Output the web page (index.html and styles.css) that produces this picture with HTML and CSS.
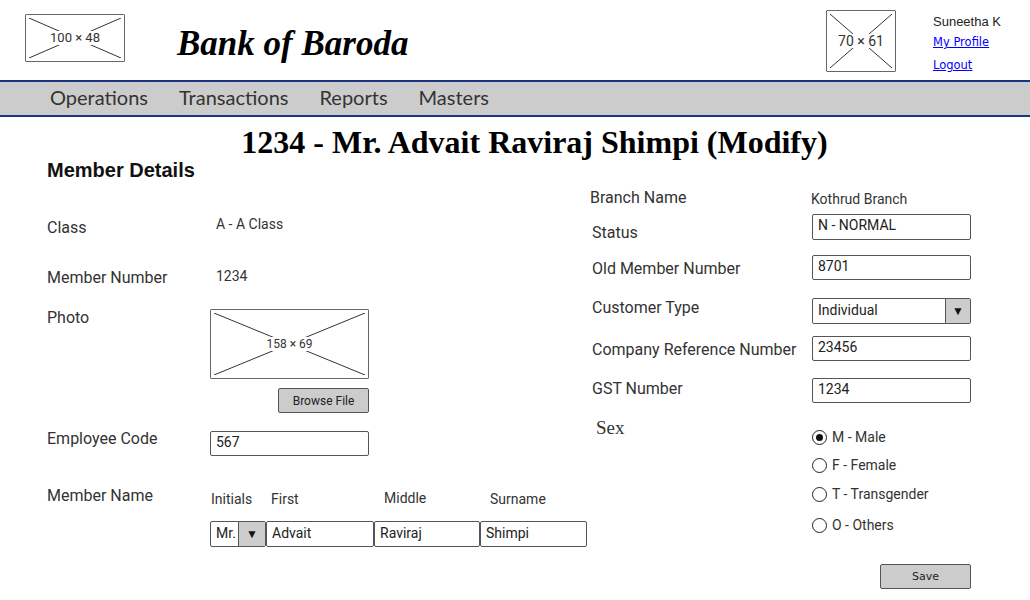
FILE: index.html
```html
<!DOCTYPE html>
<html>
<head>
<meta charset="utf-8">
<link rel="stylesheet" href="styles.css">
</head>
<body>
<header class="header">
  <div class="ph logo">
    <svg class="x" viewBox="0 0 100 100" preserveAspectRatio="none"><line x1="0" y1="0" x2="100" y2="100"/><line x1="100" y1="0" x2="0" y2="100"/></svg>
    <span class="ph-label mid">100 × 48</span>
  </div>
  <div class="brand">Bank of Baroda</div>
  <div class="ph avatar">
    <svg class="x" viewBox="0 0 100 100" preserveAspectRatio="none"><line x1="0" y1="0" x2="100" y2="100"/><line x1="100" y1="0" x2="0" y2="100"/></svg>
    <span class="ph-label big">70 × 61</span>
  </div>
  <div class="user">
    <div class="user-name">Suneetha K</div>
    <a class="user-link first" href="#">My Profile</a>
    <a class="user-link" href="#">Logout</a>
  </div>
</header>
<nav class="nav">
  <span class="nav-item">Operations</span>
  <span class="nav-item">Transactions</span>
  <span class="nav-item">Reports</span>
  <span class="nav-item">Masters</span>
</nav>
<h1 class="page-title">1234 - Mr. Advait Raviraj Shimpi (Modify)</h1>
<main class="form">
  <section class="col-left">
    <h2 class="section-title">Member Details</h2>
    <div class="row r-class">
      <div class="label pt4">Class</div>
      <div class="value">A - A Class</div>
    </div>
    <div class="row r-num">
      <div class="label pt2">Member Number</div>
      <div class="value">1234</div>
    </div>
    <div class="row r-photo">
      <div class="label">Photo</div>
      <div class="ph photo">
        <svg class="x" viewBox="0 0 100 100" preserveAspectRatio="none"><line x1="0" y1="0" x2="100" y2="100"/><line x1="100" y1="0" x2="0" y2="100"/></svg>
        <span class="ph-label">158 × 69</span>
      </div>
    </div>
    <div class="row r-browse">
      <div class="label"></div>
      <div class="browse-wrap"><button class="btn browse">Browse File</button></div>
    </div>
    <div class="row r-emp">
      <div class="label">Employee Code</div>
      <div class="input w159 mt2">567</div>
    </div>
    <div class="row r-name">
      <div class="label">Member Name</div>
      <div class="name-grid">
        <div class="sub s-init">Initials</div>
        <div class="sub s-first">First</div>
        <div class="sub s-mid">Middle</div>
        <div class="sub s-sur">Surname</div>
        <div class="select small"><span class="sel-text">Mr.</span><span class="sel-btn">▼</span></div>
        <div class="input">Advait</div>
        <div class="input">Raviraj</div>
        <div class="input">Shimpi</div>
      </div>
    </div>
  </section>
  <section class="col-right">
    <div class="row r-branch">
      <div class="label rl rl-branch">Branch Name</div>
      <div class="value pt1">Kothrud Branch</div>
    </div>
    <div class="row r-status">
      <div class="label rl pt9">Status</div>
      <div class="input w159 h26">N - NORMAL</div>
    </div>
    <div class="row r-old">
      <div class="label rl pt4">Old Member Number</div>
      <div class="input w159">8701</div>
    </div>
    <div class="row r-cust">
      <div class="label rl">Customer Type</div>
      <div class="select w159"><span class="sel-text">Individual</span><span class="sel-btn">▼</span></div>
    </div>
    <div class="row r-comp">
      <div class="label rl pt4">Company Reference Number</div>
      <div class="input w159">23456</div>
    </div>
    <div class="row r-gst">
      <div class="label rl pt1">GST Number</div>
      <div class="input w159">1234</div>
    </div>
    <div class="row r-sex">
      <div class="label rl serif">Sex</div>
      <div class="radios">
        <div class="radio"><span class="dot on"></span>M - Male</div>
        <div class="radio"><span class="dot"></span>F - Female</div>
        <div class="radio r3"><span class="dot"></span>T - Transgender</div>
        <div class="radio r4"><span class="dot"></span>O - Others</div>
      </div>
    </div>
    <div class="save-row"><button class="btn save">Save</button></div>
  </section>
</main>
</body>
</html>
```
FILE: styles.css
```css
* { box-sizing: border-box; }
body {
  margin: 0;
  width: 1030px;
  height: 600px;
  overflow: hidden;
  background: #fff;
  font-family: Roboto, "Liberation Sans", sans-serif;
  color: #333;
}

/* placeholders */
.ph {
  position: relative;
  border: 1.5px solid #666;
  border-radius: 1px;
  display: flex;
  align-items: center;
  justify-content: center;
  background: #fff;
}
.ph .x {
  position: absolute;
  inset: 3px;
  width: calc(100% - 6px);
  height: calc(100% - 6px);
}
.ph .x line { stroke: #333; stroke-width: 1; vector-effect: non-scaling-stroke; }
.ph-label {
  position: relative;
  background: #fff;
  font-size: 12px;
  color: #333;
  padding: 0 1px;
  line-height: 14px;
}
.ph-label.mid { font-size: 13px; }
.ph-label.big { font-size: 14px; }

/* header */
.header {
  height: 80px;
  display: flex;
  align-items: flex-start;
  padding-left: 25px;
}
.logo { width: 100px; height: 48px; margin-top: 14px; }
.brand {
  margin-left: 52px;
  margin-top: 24px;
  font-family: "Liberation Serif", serif;
  font-weight: bold;
  font-style: italic;
  font-size: 35px;
  line-height: 40px;
  color: #000;
}
.avatar { width: 70px; height: 62px; margin-top: 10px; margin-left: auto; }
.user {
  width: 97px;
  margin-left: 37px;
  display: flex;
  flex-direction: column;
  align-items: flex-start;
  padding-top: 13px;
}
.user-name {
  font-family: "Liberation Sans", Arial, sans-serif;
  font-size: 13px;
  line-height: 18px;
  color: #222;
}
.user-link {
  font-family: "DejaVu Sans", sans-serif;
  font-size: 11.5px;
  line-height: 15px;
  color: #00f;
  text-decoration: underline;
  margin-top: 8px;
}
.user-link.first { margin-top: 4px; }

/* nav */
.nav {
  height: 37px;
  background: #ccc;
  border-top: 2px solid #1b3381;
  border-bottom: 2px solid #1b3381;
  display: flex;
  align-items: center;
  gap: 31px;
  padding-left: 50px;
  padding-bottom: 3px;
}
.nav-item {
  font-family: Lato, sans-serif;
  font-size: 20px;
  color: #333;
}

.page-title {
  margin: 8px 0 0;
  text-align: center;
  font-family: "Liberation Serif", serif;
  font-weight: bold;
  font-size: 32px;
  line-height: 34px;
  color: #000;
  padding-left: 39px;
}

/* form */
.form { display: flex; }
.col-left { width: 590px; padding-left: 47px; }
.col-right { flex: 1; }
.section-title {
  margin: 0;
  font-family: "Liberation Sans", Arial, sans-serif;
  font-weight: bold;
  font-size: 20px;
  line-height: 22px;
  color: #111;
}
.row { display: flex; align-items: flex-start; }
.label {
  width: 163px;
  flex: none;
  font-size: 16px;
  line-height: 20px;
  color: #333;
}
.label.rl { width: 222px; padding-left: 2px; }
.label.rl-branch { padding-left: 0; width: 221px; }
.label.serif { font-family: "Liberation Serif", serif; font-size: 19px; padding-left: 6px; }
.value { font-size: 14px; line-height: 20px; color: #333; padding-left: 6px; }
.col-right .value { padding-left: 0; }
.pt1 { padding-top: 1px; }
.pt2 { padding-top: 2px; }
.pt4 { padding-top: 4px; }
.pt9 { padding-top: 9px; }
.mt2 { margin-top: 2px; }

.r-class { margin-top: 33px; }
.r-num { margin-top: 28px; }
.r-photo { margin-top: 20px; }
.photo { width: 159px; height: 70px; margin-top: 1px; }
.r-browse { margin-top: 9px; }
.browse-wrap { width: 159px; display: flex; justify-content: flex-end; }
.r-emp { margin-top: 16px; }
.r-name { margin-top: 30px; }

.input {
  height: 25px;
  border: 1.5px solid #555;
  border-radius: 2px;
  background: #fff;
  font-size: 14px;
  line-height: 21px;
  padding-left: 5px;
  color: #222;
  white-space: nowrap;
}
.w159 { width: 159px; }
.h26 { height: 26px; }

.select {
  height: 26px;
  border: 1.5px solid #555;
  border-radius: 2px;
  display: flex;
  font-size: 14px;
  color: #222;
}
.sel-text { flex: 1; padding-left: 5px; line-height: 23px; }
.sel-btn {
  width: 25px;
  background: #ccc;
  border-left: 1.5px solid #555;
  font-size: 12px;
  display: flex;
  align-items: center;
  justify-content: center;
  color: #111;
}
.select.small .sel-btn { width: 27px; }

.name-grid {
  display: grid;
  grid-template-columns: 56px 108px 106px 107px;
  grid-template-rows: 20px 26px;
  row-gap: 12px;
  padding-top: 3px;
}
.sub { font-size: 14px; line-height: 20px; color: #333; }
.s-init { padding-left: 1px; }
.s-first { padding-left: 5px; }
.s-mid { padding-left: 10px; margin-top: -1px; }
.s-sur { padding-left: 10px; }
.name-grid .input { height: 26px; line-height: 22px; }

.btn {
  height: 25px;
  width: 91px;
  background: #ccc;
  border: 1.5px solid #555;
  border-radius: 2px;
  font-size: 12px;
  color: #222;
  padding: 0;
}
.browse { font-family: Roboto, sans-serif; }

.r-branch { margin-top: 29px; }
.r-status { margin-top: 5px; }
.r-old { margin-top: 12px; }
.r-cust { margin-top: 18px; }
.r-comp { margin-top: 12px; }
.r-gst { margin-top: 17px; }
.r-sex { margin-top: 15px; }
.radios { display: flex; flex-direction: column; gap: 8px; padding-top: 9px; }
.radio.r3 { margin-top: 1px; }
.radio.r4 { margin-top: 3px; }
.radio {
  display: flex;
  align-items: center;
  font-size: 14px;
  line-height: 20px;
  color: #333;
}
.dot {
  width: 15px;
  height: 15px;
  border: 1.5px solid #222;
  border-radius: 50%;
  margin-right: 5px;
  display: flex;
  align-items: center;
  justify-content: center;
}
.dot.on::after {
  content: "";
  width: 7px;
  height: 7px;
  border-radius: 50%;
  background: #111;
}
.save-row { padding-left: 290px; margin-top: 29px; }
.save { font-family: "DejaVu Sans", sans-serif; font-size: 11px; }
```
